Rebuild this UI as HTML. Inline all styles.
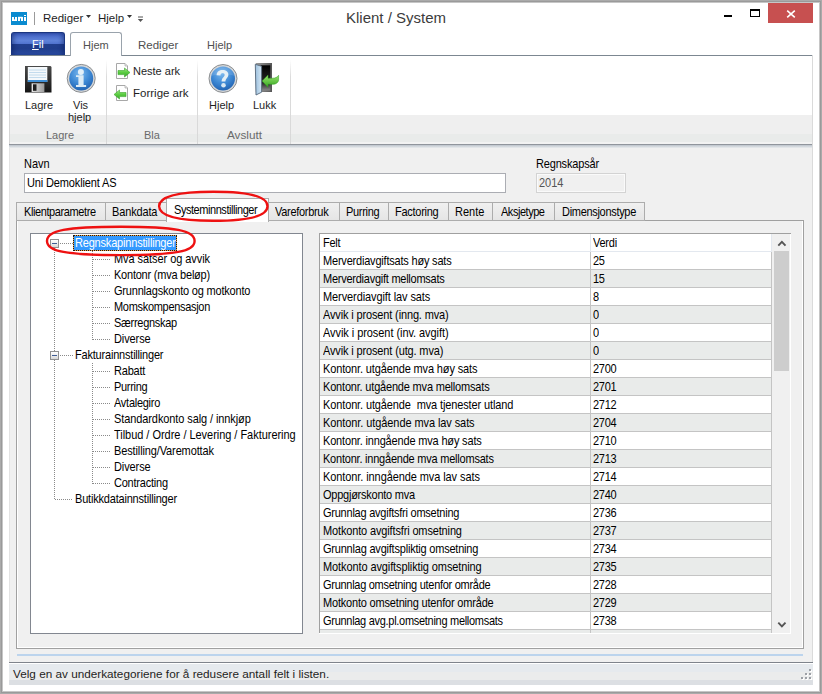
<!DOCTYPE html>
<html><head><meta charset="utf-8">
<style>
*{margin:0;padding:0;box-sizing:border-box}
html,body{width:822px;height:694px;overflow:hidden;background:#fff}
body{position:relative;font-family:"Liberation Sans",sans-serif;color:#000}
.a{position:absolute}
svg.a{overflow:visible}
.t{position:absolute;white-space:nowrap;line-height:1}
</style></head><body>
<div class="a" style="left:0px;top:0px;width:822px;height:694px;box-shadow:inset 0 0 0 1px #aaa,inset 0 0 0 2px #9a9a9a,inset 0 0 0 3px #c6c6c6;z-index:20"></div>
<div class="a" style="left:11px;top:12px;width:16px;height:13px;background:#0a8bd0"></div>
<svg class="a" style="left:0;top:0" width="30" height="30"><g fill="#fff"><rect x="12" y="17" width="2" height="4"/><rect x="15" y="17" width="2" height="4"/><rect x="12.6" y="19.4" width="4.4" height="1.6"/><rect x="18" y="17" width="2" height="4"/><rect x="21" y="17" width="2" height="4"/><rect x="18" y="16.8" width="4.4" height="1.6"/><rect x="24" y="15" width="2" height="1"/><rect x="24" y="17" width="2" height="4"/></g></svg>
<div class="a" style="left:34px;top:12px;width:1px;height:13px;background:#9a9a9a"></div>
<div class="t" style="left:43px;top:13px;font-size:11.5px;color:#1e1e1e;">Rediger</div>
<div class="t" style="left:98px;top:13px;font-size:11.5px;color:#1e1e1e;">Hjelp</div>
<div class="t" style="left:346px;top:10px;font-size:15px;color:#3c3c3c;">Klient / System</div>
<div class="a" style="left:768px;top:3px;width:45px;height:20px;background:#c75050"></div>
<div class="a" style="left:9px;top:55px;width:804px;height:630px;background:#f0f0f0"></div>
<div class="a" style="left:9px;top:55px;width:1px;height:630px;background:#e3e3e3"></div>
<div class="a" style="left:11px;top:32px;width:54px;height:23px;background:linear-gradient(#3f60c2 0,#5f82d9 35%,#5274cf 48%,#223f8e 50%,#203d8b 72%,#2e51a9 100%);border:1px solid #1a3580;border-bottom:none;border-radius:3px 3px 0 0;box-shadow:inset 3px 0 4px -1px rgba(10,30,90,.45),inset -3px 0 4px -1px rgba(10,30,90,.45)"></div>
<div class="t" style="left:32px;top:39px;font-size:11px;color:#fff;"><u style="text-decoration-thickness:1px;text-underline-offset:0.5px">F</u>il</div>
<div class="a" style="left:70px;top:32px;width:52px;height:24px;background:#fff;border:1px solid #9aa3ac;border-bottom:none;border-radius:3px 3px 0 0;z-index:2"></div>
<div class="t" style="left:83px;top:40px;font-size:11px;color:#505050;z-index:3">Hjem</div>
<div class="t" style="left:138px;top:40px;font-size:11.5px;color:#505050;">Rediger</div>
<div class="t" style="left:207px;top:40px;font-size:11px;color:#505050;">Hjelp</div>
<div class="a" style="left:9px;top:55px;width:804px;height:90px;background:#fff;border-top:1px solid #7c8791"></div>
<div class="a" style="left:9px;top:55px;width:1px;height:90px;background:#d5d5d5"></div>
<div class="a" style="left:10px;top:115px;width:803px;height:19px;background:#efefef"></div>
<div class="a" style="left:10px;top:134px;width:803px;height:8px;background:#e9ebea"></div>
<div class="a" style="left:10px;top:142px;width:803px;height:2px;background:#f2f2f2"></div>
<div class="a" style="left:9px;top:144px;width:804px;height:1px;background:#90959c"></div>
<div class="a" style="left:9px;top:145px;width:804px;height:3px;background:linear-gradient(#bcc3cb,#e9ecee)"></div>
<div class="a" style="left:106px;top:60px;width:1px;height:84px;background:linear-gradient(#fff,#dcdcdc 20%,#d8d8d8)"></div>
<div class="a" style="left:197px;top:60px;width:1px;height:84px;background:linear-gradient(#fff,#dcdcdc 20%,#d8d8d8)"></div>
<div class="a" style="left:290px;top:60px;width:1px;height:84px;background:linear-gradient(#fff,#dcdcdc 20%,#d8d8d8)"></div>
<div class="t" style="left:25px;top:100px;font-size:11px;color:#1e1e1e;">Lagre</div>
<div class="t" style="left:73px;top:100px;font-size:11px;color:#1e1e1e;">Vis</div>
<div class="t" style="left:68px;top:112px;font-size:11px;color:#1e1e1e;">hjelp</div>
<div class="t" style="left:133px;top:66px;font-size:11px;color:#1e1e1e;">Neste ark</div>
<div class="t" style="left:133px;top:88px;font-size:11.5px;color:#1e1e1e;">Forrige ark</div>
<div class="t" style="left:209px;top:100px;font-size:11px;color:#1e1e1e;">Hjelp</div>
<div class="t" style="left:253px;top:100px;font-size:11px;color:#1e1e1e;">Lukk</div>
<div class="t" style="left:46px;top:130px;font-size:11px;color:#6a6a6a;">Lagre</div>
<div class="t" style="left:144px;top:130px;font-size:11px;color:#6a6a6a;">Bla</div>
<div class="t" style="left:227px;top:129px;font-size:11.75px;color:#6a6a6a;">Avslutt</div>
<div class="t" style="left:24px;top:159px;font-size:11px;transform:scaleY(1.08);transform-origin:0 9px;">Navn</div>
<div class="a" style="left:24px;top:173px;width:482px;height:20px;background:#fff;border:1px solid #abadb3"></div>
<div class="t" style="left:27px;top:178px;font-size:11px;letter-spacing:-0.138px;transform:scaleY(1.08);transform-origin:0 9px;">Uni Demoklient AS</div>
<div class="t" style="left:536px;top:159px;font-size:11px;letter-spacing:-0.17px;transform:scaleY(1.08);transform-origin:0 9px;">Regnskapsår</div>
<div class="a" style="left:536px;top:173px;width:90px;height:20px;background:#f0f0f0;border:1px solid #d3d3d3;box-shadow:inset 0 0 0 1px #fafafa"></div>
<div class="t" style="left:539px;top:178px;font-size:11px;transform:scaleY(1.08);transform-origin:0 9px;color:#555;">2014</div>
<div class="a" style="left:16px;top:220px;width:788px;height:429px;border:1px solid #a0a0a0;background:#f0f0f0"></div>
<div class="a" style="left:17px;top:221px;width:786px;height:427px;border-left:1px solid #fff;border-bottom:1px solid #fff;border-right:1px solid #fff"></div>
<div class="a" style="left:30px;top:233px;width:273px;height:401px;background:#fff;border:1px solid #828790"></div>
<div class="a" style="left:319px;top:233px;width:472px;height:400px;background:#f0f0f0;border-top:1px solid #a0a0a0;border-left:1px solid #a0a0a0"></div>
<div class="a" style="left:17px;top:654px;width:786px;height:2px;background:#bcd4ed"></div>
<div class="a" style="left:9px;top:662px;width:804px;height:1px;background:#7f848c"></div>
<div class="a" style="left:9px;top:663px;width:804px;height:22px;background:linear-gradient(#fff 0,#fff 1px,#e6eaee 1px,#e6eaee 9px,#ebecec 9px,#ebecec 17px,#dcdfe3 17px)"></div>
<div class="a" style="left:810px;top:670px;width:2px;height:2px;background:#fff"></div>
<div class="a" style="left:809px;top:669px;width:2px;height:2px;background:#9ca0a6"></div>
<div class="a" style="left:806px;top:674px;width:2px;height:2px;background:#fff"></div>
<div class="a" style="left:805px;top:673px;width:2px;height:2px;background:#9ca0a6"></div>
<div class="a" style="left:810px;top:674px;width:2px;height:2px;background:#fff"></div>
<div class="a" style="left:809px;top:673px;width:2px;height:2px;background:#9ca0a6"></div>
<div class="a" style="left:802px;top:678px;width:2px;height:2px;background:#fff"></div>
<div class="a" style="left:801px;top:677px;width:2px;height:2px;background:#9ca0a6"></div>
<div class="a" style="left:806px;top:678px;width:2px;height:2px;background:#fff"></div>
<div class="a" style="left:805px;top:677px;width:2px;height:2px;background:#9ca0a6"></div>
<div class="a" style="left:810px;top:678px;width:2px;height:2px;background:#fff"></div>
<div class="a" style="left:809px;top:677px;width:2px;height:2px;background:#9ca0a6"></div>
<div class="a" style="left:812px;top:55px;width:1px;height:607px;background:#dadada"></div>
<div class="t" style="left:13px;top:668px;font-size:11.75px;color:#1e1e1e;">Velg en av underkategoriene for å redusere antall felt i listen.</div>
<div class="a" style="left:16px;top:202px;width:90px;height:19px;background:linear-gradient(#f0f0f0,#e5e5e5);border:1px solid #acacac"></div>
<div class="t" style="left:24px;top:207px;font-size:11px;letter-spacing:-0.4px;transform:scaleY(1.08);transform-origin:0 9px;">Klientparametre</div>
<div class="a" style="left:105px;top:202px;width:62px;height:19px;background:linear-gradient(#f0f0f0,#e5e5e5);border:1px solid #acacac"></div>
<div class="t" style="left:112px;top:207px;font-size:11px;letter-spacing:-0.143px;transform:scaleY(1.08);transform-origin:0 9px;">Bankdata</div>
<div class="a" style="left:166px;top:198px;width:103px;height:24px;background:#fff;border:1px solid #acacac;border-bottom:none;z-index:3"></div>
<div class="t" style="left:174px;top:205px;font-size:11px;letter-spacing:-0.444px;transform:scaleY(1.08);transform-origin:0 9px;z-index:4">Systeminnstillinger</div>
<div class="a" style="left:268px;top:202px;width:72px;height:19px;background:linear-gradient(#f0f0f0,#e5e5e5);border:1px solid #acacac"></div>
<div class="t" style="left:275px;top:207px;font-size:11px;letter-spacing:-0.3px;transform:scaleY(1.08);transform-origin:0 9px;">Vareforbruk</div>
<div class="a" style="left:339px;top:202px;width:50px;height:19px;background:linear-gradient(#f0f0f0,#e5e5e5);border:1px solid #acacac"></div>
<div class="t" style="left:346px;top:207px;font-size:11px;letter-spacing:-0.3px;transform:scaleY(1.08);transform-origin:0 9px;">Purring</div>
<div class="a" style="left:388px;top:202px;width:61px;height:19px;background:linear-gradient(#f0f0f0,#e5e5e5);border:1px solid #acacac"></div>
<div class="t" style="left:395px;top:207px;font-size:11px;letter-spacing:-0.275px;transform:scaleY(1.08);transform-origin:0 9px;">Factoring</div>
<div class="a" style="left:448px;top:202px;width:45px;height:19px;background:linear-gradient(#f0f0f0,#e5e5e5);border:1px solid #acacac"></div>
<div class="t" style="left:455px;top:207px;font-size:11px;transform:scaleY(1.08);transform-origin:0 9px;">Rente</div>
<div class="a" style="left:492px;top:202px;width:63px;height:19px;background:linear-gradient(#f0f0f0,#e5e5e5);border:1px solid #acacac"></div>
<div class="t" style="left:501px;top:207px;font-size:11px;letter-spacing:-0.463px;transform:scaleY(1.08);transform-origin:0 9px;">Aksjetype</div>
<div class="a" style="left:554px;top:202px;width:91px;height:19px;background:linear-gradient(#f0f0f0,#e5e5e5);border:1px solid #acacac"></div>
<div class="t" style="left:562px;top:207px;font-size:11px;letter-spacing:-0.308px;transform:scaleY(1.08);transform-origin:0 9px;">Dimensjonstype</div>
<div class="a" style="left:54px;top:248px;width:1px;height:252px;background:repeating-linear-gradient(180deg,#8a8a8a 0 1px,transparent 1px 2px)"></div>
<div class="a" style="left:50px;top:239px;width:9px;height:9px;border:1px solid #919191;background:linear-gradient(#fff,#d9d9d9)"></div>
<div class="a" style="left:52px;top:243px;width:5px;height:1px;background:#3f5d94"></div>
<div class="a" style="left:60px;top:243px;width:13px;height:1px;background:repeating-linear-gradient(90deg,#8a8a8a 0 1px,transparent 1px 2px)"></div>
<div class="a" style="left:92px;top:251px;width:1px;height:89px;background:repeating-linear-gradient(180deg,#8a8a8a 0 1px,transparent 1px 2px)"></div>
<div class="a" style="left:93px;top:259px;width:18px;height:1px;background:repeating-linear-gradient(90deg,#8a8a8a 0 1px,transparent 1px 2px)"></div>
<div class="t" style="left:114px;top:254px;font-size:11px;letter-spacing:-0.061px;transform:scaleY(1.08);transform-origin:0 9px;">Mva satser og avvik</div>
<div class="a" style="left:93px;top:275px;width:18px;height:1px;background:repeating-linear-gradient(90deg,#8a8a8a 0 1px,transparent 1px 2px)"></div>
<div class="t" style="left:114px;top:270px;font-size:11px;letter-spacing:-0.228px;transform:scaleY(1.08);transform-origin:0 9px;">Kontonr (mva beløp)</div>
<div class="a" style="left:93px;top:291px;width:18px;height:1px;background:repeating-linear-gradient(90deg,#8a8a8a 0 1px,transparent 1px 2px)"></div>
<div class="t" style="left:114px;top:286px;font-size:11px;letter-spacing:-0.192px;transform:scaleY(1.08);transform-origin:0 9px;">Grunnlagskonto og motkonto</div>
<div class="a" style="left:93px;top:307px;width:18px;height:1px;background:repeating-linear-gradient(90deg,#8a8a8a 0 1px,transparent 1px 2px)"></div>
<div class="t" style="left:114px;top:302px;font-size:11px;letter-spacing:-0.307px;transform:scaleY(1.08);transform-origin:0 9px;">Momskompensasjon</div>
<div class="a" style="left:93px;top:323px;width:18px;height:1px;background:repeating-linear-gradient(90deg,#8a8a8a 0 1px,transparent 1px 2px)"></div>
<div class="t" style="left:114px;top:318px;font-size:11px;letter-spacing:-0.28px;transform:scaleY(1.08);transform-origin:0 9px;">Særregnskap</div>
<div class="a" style="left:93px;top:339px;width:18px;height:1px;background:repeating-linear-gradient(90deg,#8a8a8a 0 1px,transparent 1px 2px)"></div>
<div class="t" style="left:114px;top:334px;font-size:11px;letter-spacing:-0.1px;transform:scaleY(1.08);transform-origin:0 9px;">Diverse</div>
<div class="a" style="left:73px;top:235px;width:104px;height:16px;background:linear-gradient(#3399ff,#3399ff) padding-box,#f0a040 border-box;border:1px dotted #1a1a1a"></div>
<div class="t" style="left:75px;top:238px;font-size:11px;letter-spacing:-0.185px;transform:scaleY(1.08);transform-origin:0 9px;color:#fff;">Regnskapinnstillinger</div>
<div class="a" style="left:50px;top:351px;width:9px;height:9px;border:1px solid #919191;background:linear-gradient(#fff,#d9d9d9)"></div>
<div class="a" style="left:52px;top:355px;width:5px;height:1px;background:#3f5d94"></div>
<div class="a" style="left:60px;top:355px;width:13px;height:1px;background:repeating-linear-gradient(90deg,#8a8a8a 0 1px,transparent 1px 2px)"></div>
<div class="a" style="left:92px;top:363px;width:1px;height:121px;background:repeating-linear-gradient(180deg,#8a8a8a 0 1px,transparent 1px 2px)"></div>
<div class="a" style="left:93px;top:371px;width:18px;height:1px;background:repeating-linear-gradient(90deg,#8a8a8a 0 1px,transparent 1px 2px)"></div>
<div class="t" style="left:114px;top:366px;font-size:11px;letter-spacing:-0.2px;transform:scaleY(1.08);transform-origin:0 9px;">Rabatt</div>
<div class="a" style="left:93px;top:387px;width:18px;height:1px;background:repeating-linear-gradient(90deg,#8a8a8a 0 1px,transparent 1px 2px)"></div>
<div class="t" style="left:114px;top:382px;font-size:11px;letter-spacing:-0.3px;transform:scaleY(1.08);transform-origin:0 9px;">Purring</div>
<div class="a" style="left:93px;top:403px;width:18px;height:1px;background:repeating-linear-gradient(90deg,#8a8a8a 0 1px,transparent 1px 2px)"></div>
<div class="t" style="left:114px;top:398px;font-size:11px;letter-spacing:-0.267px;transform:scaleY(1.08);transform-origin:0 9px;">Avtalegiro</div>
<div class="a" style="left:93px;top:419px;width:18px;height:1px;background:repeating-linear-gradient(90deg,#8a8a8a 0 1px,transparent 1px 2px)"></div>
<div class="t" style="left:114px;top:414px;font-size:11px;letter-spacing:-0.096px;transform:scaleY(1.08);transform-origin:0 9px;">Standardkonto salg / innkjøp</div>
<div class="a" style="left:93px;top:435px;width:18px;height:1px;background:repeating-linear-gradient(90deg,#8a8a8a 0 1px,transparent 1px 2px)"></div>
<div class="t" style="left:114px;top:430px;font-size:11px;letter-spacing:-0.034px;transform:scaleY(1.08);transform-origin:0 9px;">Tilbud / Ordre / Levering / Fakturering</div>
<div class="a" style="left:93px;top:451px;width:18px;height:1px;background:repeating-linear-gradient(90deg,#8a8a8a 0 1px,transparent 1px 2px)"></div>
<div class="t" style="left:114px;top:446px;font-size:11px;letter-spacing:-0.125px;transform:scaleY(1.08);transform-origin:0 9px;">Bestilling/Varemottak</div>
<div class="a" style="left:93px;top:467px;width:18px;height:1px;background:repeating-linear-gradient(90deg,#8a8a8a 0 1px,transparent 1px 2px)"></div>
<div class="t" style="left:114px;top:462px;font-size:11px;letter-spacing:-0.1px;transform:scaleY(1.08);transform-origin:0 9px;">Diverse</div>
<div class="a" style="left:93px;top:483px;width:18px;height:1px;background:repeating-linear-gradient(90deg,#8a8a8a 0 1px,transparent 1px 2px)"></div>
<div class="t" style="left:114px;top:478px;font-size:11px;letter-spacing:-0.22px;transform:scaleY(1.08);transform-origin:0 9px;">Contracting</div>
<div class="t" style="left:75px;top:350px;font-size:11px;letter-spacing:-0.2px;transform:scaleY(1.08);transform-origin:0 9px;">Fakturainnstillinger</div>
<div class="a" style="left:55px;top:499px;width:18px;height:1px;background:repeating-linear-gradient(90deg,#8a8a8a 0 1px,transparent 1px 2px)"></div>
<div class="t" style="left:75px;top:494px;font-size:11px;letter-spacing:-0.195px;transform:scaleY(1.08);transform-origin:0 9px;">Butikkdatainnstillinger</div>
<div class="a" style="left:320px;top:234px;width:452px;height:17px;background:#fff"></div>
<div class="a" style="left:320px;top:251px;width:452px;height:1px;background:#e3e8ef"></div>
<div class="a" style="left:590px;top:234px;width:1px;height:17px;background:#e3e8ef"></div>
<div class="t" style="left:323px;top:238px;font-size:11px;letter-spacing:-0.25px;transform:scaleY(1.08);transform-origin:0 9px;">Felt</div>
<div class="t" style="left:593px;top:238px;font-size:11px;letter-spacing:-0.25px;transform:scaleY(1.08);transform-origin:0 9px;">Verdi</div>
<div class="a" style="left:320px;top:252px;width:452px;height:17px;background:#fff"></div>
<div class="a" style="left:320px;top:269px;width:452px;height:1px;background:#c4c4c4"></div>
<div class="t" style="left:323px;top:256px;font-size:11px;letter-spacing:-0.2px;transform:scaleY(1.08);transform-origin:0 9px;">Merverdiavgiftsats høy sats</div>
<div class="t" style="left:593px;top:256px;font-size:11px;letter-spacing:-0.25px;transform:scaleY(1.08);transform-origin:0 9px;">25</div>
<div class="a" style="left:320px;top:270px;width:452px;height:17px;background:#e9ebea"></div>
<div class="a" style="left:320px;top:287px;width:452px;height:1px;background:#c4c4c4"></div>
<div class="t" style="left:323px;top:274px;font-size:11px;letter-spacing:-0.25px;transform:scaleY(1.08);transform-origin:0 9px;">Merverdiavgift mellomsats</div>
<div class="t" style="left:593px;top:274px;font-size:11px;letter-spacing:-0.25px;transform:scaleY(1.08);transform-origin:0 9px;">15</div>
<div class="a" style="left:320px;top:288px;width:452px;height:17px;background:#fff"></div>
<div class="a" style="left:320px;top:305px;width:452px;height:1px;background:#c4c4c4"></div>
<div class="t" style="left:323px;top:292px;font-size:11px;letter-spacing:-0.095px;transform:scaleY(1.08);transform-origin:0 9px;">Merverdiavgift lav sats</div>
<div class="t" style="left:593px;top:292px;font-size:11px;letter-spacing:-0.25px;transform:scaleY(1.08);transform-origin:0 9px;">8</div>
<div class="a" style="left:320px;top:306px;width:452px;height:17px;background:#e9ebea"></div>
<div class="a" style="left:320px;top:323px;width:452px;height:1px;background:#c4c4c4"></div>
<div class="t" style="left:323px;top:310px;font-size:11px;letter-spacing:-0.142px;transform:scaleY(1.08);transform-origin:0 9px;">Avvik i prosent (inng. mva)</div>
<div class="t" style="left:593px;top:310px;font-size:11px;letter-spacing:-0.25px;transform:scaleY(1.08);transform-origin:0 9px;">0</div>
<div class="a" style="left:320px;top:324px;width:452px;height:17px;background:#fff"></div>
<div class="a" style="left:320px;top:341px;width:452px;height:1px;background:#c4c4c4"></div>
<div class="t" style="left:323px;top:328px;font-size:11px;letter-spacing:-0.061px;transform:scaleY(1.08);transform-origin:0 9px;">Avvik i prosent (inv. avgift)</div>
<div class="t" style="left:593px;top:328px;font-size:11px;letter-spacing:-0.25px;transform:scaleY(1.08);transform-origin:0 9px;">0</div>
<div class="a" style="left:320px;top:342px;width:452px;height:17px;background:#e9ebea"></div>
<div class="a" style="left:320px;top:359px;width:452px;height:1px;background:#c4c4c4"></div>
<div class="t" style="left:323px;top:346px;font-size:11px;letter-spacing:-0.14px;transform:scaleY(1.08);transform-origin:0 9px;">Avvik i prosent (utg. mva)</div>
<div class="t" style="left:593px;top:346px;font-size:11px;letter-spacing:-0.25px;transform:scaleY(1.08);transform-origin:0 9px;">0</div>
<div class="a" style="left:320px;top:360px;width:452px;height:17px;background:#fff"></div>
<div class="a" style="left:320px;top:377px;width:452px;height:1px;background:#c4c4c4"></div>
<div class="t" style="left:323px;top:364px;font-size:11px;letter-spacing:-0.134px;transform:scaleY(1.08);transform-origin:0 9px;">Kontonr. utgående mva høy sats</div>
<div class="t" style="left:593px;top:364px;font-size:11px;letter-spacing:-0.25px;transform:scaleY(1.08);transform-origin:0 9px;">2700</div>
<div class="a" style="left:320px;top:378px;width:452px;height:17px;background:#e9ebea"></div>
<div class="a" style="left:320px;top:395px;width:452px;height:1px;background:#c4c4c4"></div>
<div class="t" style="left:323px;top:382px;font-size:11px;letter-spacing:-0.187px;transform:scaleY(1.08);transform-origin:0 9px;">Kontonr. utgående mva mellomsats</div>
<div class="t" style="left:593px;top:382px;font-size:11px;letter-spacing:-0.25px;transform:scaleY(1.08);transform-origin:0 9px;">2701</div>
<div class="a" style="left:320px;top:396px;width:452px;height:17px;background:#fff"></div>
<div class="a" style="left:320px;top:413px;width:452px;height:1px;background:#c4c4c4"></div>
<div class="t" style="left:323px;top:400px;font-size:11px;letter-spacing:-0.124px;transform:scaleY(1.08);transform-origin:0 9px;">Kontonr. utgående&nbsp; mva tjenester utland</div>
<div class="t" style="left:593px;top:400px;font-size:11px;letter-spacing:-0.25px;transform:scaleY(1.08);transform-origin:0 9px;">2712</div>
<div class="a" style="left:320px;top:414px;width:452px;height:17px;background:#e9ebea"></div>
<div class="a" style="left:320px;top:431px;width:452px;height:1px;background:#c4c4c4"></div>
<div class="t" style="left:323px;top:418px;font-size:11px;letter-spacing:-0.086px;transform:scaleY(1.08);transform-origin:0 9px;">Kontonr. utgående mva lav sats</div>
<div class="t" style="left:593px;top:418px;font-size:11px;letter-spacing:-0.25px;transform:scaleY(1.08);transform-origin:0 9px;">2704</div>
<div class="a" style="left:320px;top:432px;width:452px;height:17px;background:#fff"></div>
<div class="a" style="left:320px;top:449px;width:452px;height:1px;background:#c4c4c4"></div>
<div class="t" style="left:323px;top:436px;font-size:11px;letter-spacing:-0.17px;transform:scaleY(1.08);transform-origin:0 9px;">Kontonr. inngående mva høy sats</div>
<div class="t" style="left:593px;top:436px;font-size:11px;letter-spacing:-0.25px;transform:scaleY(1.08);transform-origin:0 9px;">2710</div>
<div class="a" style="left:320px;top:450px;width:452px;height:17px;background:#e9ebea"></div>
<div class="a" style="left:320px;top:467px;width:452px;height:1px;background:#c4c4c4"></div>
<div class="t" style="left:323px;top:454px;font-size:11px;letter-spacing:-0.219px;transform:scaleY(1.08);transform-origin:0 9px;">Kontonr. inngående mva mellomsats</div>
<div class="t" style="left:593px;top:454px;font-size:11px;letter-spacing:-0.25px;transform:scaleY(1.08);transform-origin:0 9px;">2713</div>
<div class="a" style="left:320px;top:468px;width:452px;height:17px;background:#fff"></div>
<div class="a" style="left:320px;top:485px;width:452px;height:1px;background:#c4c4c4"></div>
<div class="t" style="left:323px;top:472px;font-size:11px;letter-spacing:-0.09px;transform:scaleY(1.08);transform-origin:0 9px;">Kontonr. inngående mva lav sats</div>
<div class="t" style="left:593px;top:472px;font-size:11px;letter-spacing:-0.25px;transform:scaleY(1.08);transform-origin:0 9px;">2714</div>
<div class="a" style="left:320px;top:486px;width:452px;height:17px;background:#e9ebea"></div>
<div class="a" style="left:320px;top:503px;width:452px;height:1px;background:#c4c4c4"></div>
<div class="t" style="left:323px;top:490px;font-size:11px;letter-spacing:-0.244px;transform:scaleY(1.08);transform-origin:0 9px;">Oppgjørskonto mva</div>
<div class="t" style="left:593px;top:490px;font-size:11px;letter-spacing:-0.25px;transform:scaleY(1.08);transform-origin:0 9px;">2740</div>
<div class="a" style="left:320px;top:504px;width:452px;height:17px;background:#fff"></div>
<div class="a" style="left:320px;top:521px;width:452px;height:1px;background:#c4c4c4"></div>
<div class="t" style="left:323px;top:508px;font-size:11px;letter-spacing:-0.239px;transform:scaleY(1.08);transform-origin:0 9px;">Grunnlag avgiftsfri omsetning</div>
<div class="t" style="left:593px;top:508px;font-size:11px;letter-spacing:-0.25px;transform:scaleY(1.08);transform-origin:0 9px;">2736</div>
<div class="a" style="left:320px;top:522px;width:452px;height:17px;background:#e9ebea"></div>
<div class="a" style="left:320px;top:539px;width:452px;height:1px;background:#c4c4c4"></div>
<div class="t" style="left:323px;top:526px;font-size:11px;letter-spacing:-0.146px;transform:scaleY(1.08);transform-origin:0 9px;">Motkonto avgiftsfri omsetning</div>
<div class="t" style="left:593px;top:526px;font-size:11px;letter-spacing:-0.25px;transform:scaleY(1.08);transform-origin:0 9px;">2737</div>
<div class="a" style="left:320px;top:540px;width:452px;height:17px;background:#fff"></div>
<div class="a" style="left:320px;top:557px;width:452px;height:1px;background:#c4c4c4"></div>
<div class="t" style="left:323px;top:544px;font-size:11px;letter-spacing:-0.209px;transform:scaleY(1.08);transform-origin:0 9px;">Grunnlag avgiftspliktig omsetning</div>
<div class="t" style="left:593px;top:544px;font-size:11px;letter-spacing:-0.25px;transform:scaleY(1.08);transform-origin:0 9px;">2734</div>
<div class="a" style="left:320px;top:558px;width:452px;height:17px;background:#e9ebea"></div>
<div class="a" style="left:320px;top:575px;width:452px;height:1px;background:#c4c4c4"></div>
<div class="t" style="left:323px;top:562px;font-size:11px;letter-spacing:-0.103px;transform:scaleY(1.08);transform-origin:0 9px;">Motkonto avgiftspliktig omsetning</div>
<div class="t" style="left:593px;top:562px;font-size:11px;letter-spacing:-0.25px;transform:scaleY(1.08);transform-origin:0 9px;">2735</div>
<div class="a" style="left:320px;top:576px;width:452px;height:17px;background:#fff"></div>
<div class="a" style="left:320px;top:593px;width:452px;height:1px;background:#c4c4c4"></div>
<div class="t" style="left:323px;top:580px;font-size:11px;letter-spacing:-0.284px;transform:scaleY(1.08);transform-origin:0 9px;">Grunnlag omsetning utenfor område</div>
<div class="t" style="left:593px;top:580px;font-size:11px;letter-spacing:-0.25px;transform:scaleY(1.08);transform-origin:0 9px;">2728</div>
<div class="a" style="left:320px;top:594px;width:452px;height:17px;background:#e9ebea"></div>
<div class="a" style="left:320px;top:611px;width:452px;height:1px;background:#c4c4c4"></div>
<div class="t" style="left:323px;top:598px;font-size:11px;letter-spacing:-0.188px;transform:scaleY(1.08);transform-origin:0 9px;">Motkonto omsetning utenfor område</div>
<div class="t" style="left:593px;top:598px;font-size:11px;letter-spacing:-0.25px;transform:scaleY(1.08);transform-origin:0 9px;">2729</div>
<div class="a" style="left:320px;top:612px;width:452px;height:17px;background:#fff"></div>
<div class="a" style="left:320px;top:629px;width:452px;height:1px;background:#c4c4c4"></div>
<div class="t" style="left:323px;top:616px;font-size:11px;letter-spacing:-0.289px;transform:scaleY(1.08);transform-origin:0 9px;">Grunnlag avg.pl.omsetning mellomsats</div>
<div class="t" style="left:593px;top:616px;font-size:11px;letter-spacing:-0.25px;transform:scaleY(1.08);transform-origin:0 9px;">2738</div>
<div class="a" style="left:320px;top:630px;width:452px;height:3px;background:#e9ebea"></div>
<div class="a" style="left:590px;top:252px;width:1px;height:381px;background:#c4c4c4"></div>
<div class="a" style="left:771px;top:234px;width:1px;height:17px;background:#e3e8ef"></div>
<div class="a" style="left:771px;top:252px;width:1px;height:381px;background:#c4c4c4"></div>
<div class="a" style="left:774px;top:234px;width:16px;height:399px;background:#f0f0f0"></div>
<div class="a" style="left:774px;top:251px;width:15px;height:120px;background:#cdcdcd"></div>
<svg class="a" style="left:774px;top:236px" width="16" height="14"><path d="M4.3 9.6 L7.9 5.8 L11.5 9.6" stroke="#555" stroke-width="1.9" fill="none"/></svg>
<svg class="a" style="left:774px;top:619px" width="16" height="14"><path d="M4.3 3.6 L7.9 7.4 L11.5 3.6" stroke="#555" stroke-width="1.9" fill="none"/></svg>
<div class="a" style="left:790px;top:234px;width:1px;height:400px;background:#fff"></div>
<div class="a" style="left:319px;top:633px;width:472px;height:1px;background:#fff"></div>
<svg class="a" style="left:0;top:0;z-index:10" width="822" height="694"><path d="M159.10 206.30 C159.10 196.44 176.44 191.80 213.30 191.80 C250.16 191.80 267.50 196.44 267.50 206.30 C267.50 216.16 250.16 220.80 213.30 220.80 C176.44 220.80 159.10 216.16 159.10 206.30 Z" fill="none" stroke="#ee1111" stroke-width="2.4"/><path d="M47.00 240.90 C47.00 230.39 66.19 226.70 120.80 226.70 C175.41 226.70 194.60 230.39 194.60 240.90 C194.60 251.41 175.41 255.10 120.80 255.10 C66.19 255.10 47.00 251.41 47.00 240.90 Z" fill="none" stroke="#ee1111" stroke-width="2.4"/></svg>
<!-- window controls -->
<div class="a" style="left:724px;top:15px;width:8px;height:2px;background:#000"></div>
<div class="a" style="left:750px;top:9px;width:10px;height:8px;border:1px solid #000;border-top-width:2px"></div>
<svg class="a" style="left:768px;top:3px" width="45" height="20"><path d="M19.2 7.7 L26.8 14.3 M26.8 7.7 L19.2 14.3" stroke="#fff" stroke-width="1.6"/></svg>
<!-- quick access glyphs -->
<svg class="a" style="left:0;top:0" width="160" height="30">
<path d="M86 15 L91 15 L88.5 18 Z" fill="#333"/>
<path d="M127 15 L132 15 L129.5 18 Z" fill="#333"/>
<rect x="138" y="16.5" width="5" height="1" fill="#555"/>
<path d="M137.8 19 L143.2 19 L140.5 22 Z" fill="#555"/>
</svg>
<!-- floppy -->
<svg class="a" style="left:22px;top:63px" width="32" height="32" viewBox="0 0 32 32">
<defs><linearGradient id="fd" x1="0" y1="0" x2="0" y2="1"><stop offset="0" stop-color="#4a4a4a"/><stop offset="1" stop-color="#151515"/></linearGradient>
<linearGradient id="sh" x1="0" y1="0" x2="1" y2="0"><stop offset="0" stop-color="#e8e8e8"/><stop offset="1" stop-color="#9a9a9a"/></linearGradient></defs>
<path d="M3 3 H28.5 L29.5 4 V29.5 H3 Z" fill="url(#fd)"/>
<rect x="5.8" y="4" width="19.5" height="15" fill="#f4f8fb"/>
<g stroke="#b6d3ea" stroke-width="0.8"><line x1="7" y1="7" x2="24" y2="7"/><line x1="7" y1="9.5" x2="24" y2="9.5"/><line x1="7" y1="12" x2="24" y2="12"/><line x1="7" y1="14.5" x2="24" y2="14.5"/></g>
<rect x="5.8" y="17" width="19.5" height="2" fill="#3f8fd6"/>
<rect x="9.6" y="20.3" width="12.8" height="8.7" fill="url(#sh)"/>
<rect x="11" y="21.3" width="3.5" height="6.5" fill="#1e1e1e"/>
</svg>
<!-- info -->
<svg class="a" style="left:65px;top:62px" width="33" height="33" viewBox="0 0 33 33">
<defs><radialGradient id="ib" cx="0.45" cy="0.3" r="0.75"><stop offset="0" stop-color="#7ab8ee"/><stop offset="0.55" stop-color="#3d88d4"/><stop offset="1" stop-color="#1f5fae"/></radialGradient></defs>
<circle cx="16.2" cy="16.4" r="14" fill="#d4d6d8" stroke="#8c8f92" stroke-width="1"/>
<circle cx="16.2" cy="16.4" r="12" fill="url(#ib)"/>
<circle cx="15.9" cy="9.9" r="3.0" fill="#e4f0f8"/>
<path d="M11 13.3 H18.6 V22.9 H21.1 V25.1 H11 V22.9 H13.4 V15 H11 Z" fill="#dcebf5"/>
</svg>
<!-- neste ark -->
<svg class="a" style="left:112px;top:62px" width="20" height="18" viewBox="0 0 20 18">
<path d="M4.5 1.5 H13 L15.5 4 V16.5 H4.5 Z" fill="#fff" stroke="#a8a8a8"/>
<path d="M13 1.5 V4 H15.5" fill="#e6e6e6" stroke="#a8a8a8" stroke-width="0.7"/>
<defs><linearGradient id="ag" x1="0" y1="0" x2="0" y2="1"><stop offset="0" stop-color="#a6ec8c"/><stop offset="0.45" stop-color="#5fcf45"/><stop offset="1" stop-color="#38a82a"/></linearGradient></defs><path d="M6 8.5 H12.5 V6 L18 10.5 L12.5 15 V12.6 H6 Z" fill="url(#ag)" stroke="#3aa52c" stroke-width="0.6"/>
</svg>
<!-- forrige ark -->
<svg class="a" style="left:112px;top:84px" width="20" height="18" viewBox="0 0 20 18">
<path d="M4.5 1.5 H13 L15.5 4 V16.5 H4.5 Z" fill="#fff" stroke="#a8a8a8"/>
<path d="M13 1.5 V4 H15.5" fill="#e6e6e6" stroke="#a8a8a8" stroke-width="0.7"/>
<path d="M14 8.5 H7.5 V6 L2 10.5 L7.5 15 V12.6 H14 Z" fill="url(#ag)" stroke="#3aa52c" stroke-width="0.6"/>
</svg>
<!-- help -->
<svg class="a" style="left:207px;top:62px" width="33" height="33" viewBox="0 0 33 33">
<circle cx="16" cy="16.5" r="14" fill="#d4d6d8" stroke="#8c8f92" stroke-width="1"/>
<circle cx="16" cy="16.5" r="12" fill="url(#ib)"/>
<path d="M4.3 14 C6 6.5 11 4.5 16 4.5 C21 4.5 26 6.5 27.7 14 C22 11.5 10 11.5 4.3 14 Z" fill="#fff" opacity="0.13"/>
<path d="M9.6 13.2 C9.6 9.6 12.3 7.9 15.6 7.9 C19 7.9 21.4 9.8 21.4 12.6 C21.4 15.6 18.6 16.4 18.4 19.6 H14.6 C14.6 15.6 17.6 14.8 17.6 12.9 C17.6 11.8 16.8 11.1 15.6 11.1 C14.3 11.1 13.5 12 13.5 13.6 Z" fill="#e6f0f6"/>
<circle cx="16.5" cy="23.2" r="2.3" fill="#d8e8f2"/>
</svg>
<!-- lukk (door) -->
<svg class="a" style="left:250px;top:60px" width="32" height="36" viewBox="0 0 32 36">
<defs><linearGradient id="dr" x1="0" y1="0" x2="1" y2="0"><stop offset="0" stop-color="#9cc0de"/><stop offset="1" stop-color="#d4e6f3"/></linearGradient>
<linearGradient id="fr" x1="0" y1="0" x2="1" y2="0"><stop offset="0" stop-color="#9a9a9a"/><stop offset="1" stop-color="#555"/></linearGradient>
<linearGradient id="in" x1="0" y1="0" x2="0" y2="1"><stop offset="0" stop-color="#000"/><stop offset="0.7" stop-color="#2a2a2a"/><stop offset="1" stop-color="#8a8a8a"/></linearGradient>
<linearGradient id="ga" x1="0" y1="0" x2="0" y2="1"><stop offset="0" stop-color="#9be36f"/><stop offset="1" stop-color="#34a81f"/></linearGradient></defs>
<path d="M5.8 3 H22 V32 H5.8 Z" fill="url(#fr)"/>
<path d="M10.5 5.3 H20.3 V30.5 H10.5 Z" fill="url(#in)"/>
<path d="M5.3 4.3 L11.6 6.3 V32.2 L6 35 Z" fill="url(#dr)" stroke="#56687a" stroke-width="0.9"/>
<path d="M12 21 L18 15 V18.2 H23 C25.5 18.2 27.5 17 28.6 15.3 V19.8 C28.6 22.5 26 24.3 23 24.3 H18 V27.3 Z" fill="url(#ga)" stroke="#2f9a1e" stroke-width="0.5"/>
</svg>

</body></html>
